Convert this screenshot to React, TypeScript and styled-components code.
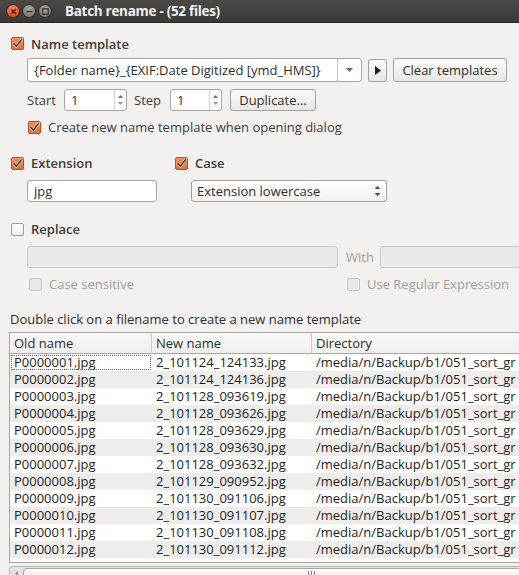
import React from "react";
import styled, { createGlobalStyle, css } from "styled-components";

const GlobalStyle = createGlobalStyle`
  html, body { margin: 0; padding: 0; background: #f2f1f0; }
  body { font-family: "Open Sans", "DejaVu Sans", sans-serif; font-size: 13px; color: #3c3c3c; }
  * { box-sizing: border-box; }
`;

const Window = styled.div`
  width: 519px;
  height: 575px;
  overflow: hidden;
  background: #f2f1f0;
  display: flex;
  flex-direction: column;
`;

const TitleBar = styled.div`
  height: 23px;
  flex: none;
  display: flex;
  align-items: center;
  background: linear-gradient(#4a4945, #3a3935);
  border-bottom: 1px solid #2a2926;
  padding-left: 6px;
`;

const WinBtn = styled.div<{ $close?: boolean }>`
  width: 14px;
  height: 14px;
  border-radius: 50%;
  margin-right: 2px;
  display: flex;
  align-items: center;
  justify-content: center;
  border: 1px solid #2d2c29;
  background: ${(p) =>
    p.$close
      ? "radial-gradient(circle at 50% 35%, #f8956b, #e4511d 70%)"
      : "radial-gradient(circle at 50% 35%, #a8a7a2, #7c7b77 70%)"};
`;

const Title = styled.div`
  margin-left: 11px;
  color: #f2f1f0;
  font-weight: bold;
  font-size: 13.5px;
  letter-spacing: -0.3px;
`;

const Content = styled.div`
  display: flex;
  flex-direction: column;
  padding-left: 11px;
  flex: 1;
  min-height: 0;
`;

const Row = styled.div<{ $top: number; $h: number; $indent?: number; $gap?: number }>`
  display: flex;
  align-items: center;
  margin-top: ${(p) => p.$top}px;
  height: ${(p) => p.$h}px;
  padding-left: ${(p) => p.$indent ?? 0}px;
  gap: ${(p) => p.$gap ?? 0}px;
  flex: none;
  white-space: nowrap;
`;

const CheckLabel = styled.label<{ $disabled?: boolean; $bold?: boolean; $w?: number }>`
  display: inline-flex;
  align-items: center;
  gap: 7px;
  flex: none;
  color: ${(p) => (p.$disabled ? "#a09f9c" : "#3c3c3c")};
  font-weight: ${(p) => (p.$bold ? 600 : 400)};
  width: ${(p) => (p.$w ? `${p.$w}px` : "auto")};
`;

const Box = styled.span<{ $checked?: boolean; $disabled?: boolean }>`
  width: 13px;
  height: 13px;
  border-radius: 2px;
  display: inline-flex;
  align-items: center;
  justify-content: center;
  flex: none;
  ${(p) =>
    p.$checked
      ? css`
          background: linear-gradient(#f6905f, #e96a33);
          border: 1px solid #b9501f;
        `
      : p.$disabled
      ? css`
          background: #e9e8e6;
          border: 1px solid #c9c7c4;
        `
      : css`
          background: linear-gradient(#ffffff, #f1f0ef);
          border: 1px solid #9f9d99;
        `}
`;

const Check = ({ checked, disabled }: { checked?: boolean; disabled?: boolean }) => (
  <Box $checked={checked} $disabled={disabled}>
    {checked && (
      <svg width="11" height="11" viewBox="0 0 11 11">
        <path d="M1.8 5.6 L4.3 8.3 L9.4 1.6" fill="none" stroke="#fff" strokeWidth="2.6" strokeLinecap="round" strokeLinejoin="round" />
        <path d="M1.8 5.6 L4.3 8.3 L9.4 1.6" fill="none" stroke="#3b2a22" strokeWidth="1.5" strokeLinecap="round" strokeLinejoin="round" />
      </svg>
    )}
  </Box>
);

const Field = styled.div<{ $w: number; $h?: number; $disabled?: boolean }>`
  width: ${(p) => p.$w}px;
  height: ${(p) => p.$h ?? 22}px;
  flex: none;
  display: flex;
  align-items: center;
  border-radius: 3px;
  border: 1px solid ${(p) => (p.$disabled ? "#cbc9c6" : "#a9a7a3")};
  background: ${(p) => (p.$disabled ? "#ebeae8" : "#ffffff")};
  padding-left: 6px;
  color: #2e2e2e;
  overflow: hidden;
  position: relative;
`;

const FieldText = styled.span`
  flex: 1;
  overflow: hidden;
  white-space: nowrap;
`;

const ComboDrop = styled.div`
  width: 24px;
  align-self: stretch;
  border-left: 1px solid #c8c6c3;
  display: flex;
  align-items: center;
  justify-content: center;
  flex: none;
`;

const SpinArrows = styled.div`
  width: 12px;
  align-self: stretch;
  border-left: 1px solid #d6d4d1;
  display: flex;
  flex-direction: column;
  align-items: center;
  justify-content: center;
  gap: 4px;
  flex: none;
`;

const Button = styled.div<{ $w: number; $h?: number }>`
  width: ${(p) => p.$w}px;
  height: ${(p) => p.$h ?? 22}px;
  flex: none;
  display: flex;
  align-items: center;
  justify-content: center;
  border-radius: 3px;
  border: 1px solid #a3a19d;
  background: linear-gradient(#fbfbfa, #e8e7e5);
  color: #2e2e2e;
`;

const SelectBox = styled.div<{ $w: number }>`
  width: ${(p) => p.$w}px;
  height: 22px;
  flex: none;
  display: flex;
  align-items: center;
  justify-content: space-between;
  border-radius: 3px;
  border: 1px solid #a3a19d;
  background: linear-gradient(#ffffff, #f3f2f1);
  padding: 0 6px 0 5px;
  color: #2e2e2e;
`;

const PlainLabel = styled.span<{ $disabled?: boolean }>`
  flex: none;
  color: ${(p) => (p.$disabled ? "#a09f9c" : "#3c3c3c")};
`;

const Hint = styled.div`
  margin-top: 20px;
  height: 16px;
  line-height: 16px;
  flex: none;
  margin-left: -1px;
  white-space: nowrap;
  color: #2e2e2e;
`;

const TableWrap = styled.div`
  margin-top: 5px;
  margin-left: -2px;
  width: 560px;
  border: 1px solid #a8a6a2;
  border-right: none;
  background: #ffffff;
  flex: none;
  height: 231px;
  overflow: hidden;
`;

const Grid = styled.div`
  display: grid;
  grid-template-columns: 142px 160px 260px;
`;

const HeadCell = styled.div<{ $last?: boolean }>`
  height: 21px;
  line-height: 20px;
  padding-left: 4px;
  background: linear-gradient(#f9f9f8, #efeeec);
  border-bottom: 1px solid #a8a6a2;
  border-right: 1px solid ${(p) => (p.$last ? "transparent" : "#cfcdca")};
  color: #2e2e2e;
  white-space: nowrap;
`;

const Cell = styled.div<{ $alt?: boolean; $focus?: boolean }>`
  height: 17px;
  line-height: 17px;
  padding-left: 4px;
  background: ${(p) => (p.$alt ? "#eeedec" : "#ffffff")};
  color: #1e1e1e;
  white-space: nowrap;
  overflow: hidden;
  position: relative;
  ${(p) =>
    p.$focus &&
    css`
      outline: 1px dotted #6a6a6a;
      outline-offset: -2px;
    `}
`;

const ScrollBar = styled.div`
  margin-top: 3px;
  margin-left: -2px;
  height: 14px;
  width: 560px;
  display: flex;
  align-items: stretch;
  flex: none;
  background: #e4e3e1;
  border: 1px solid #b8b6b2;
  border-radius: 3px 0 0 0;
`;

const ScrollArrow = styled.div`
  width: 12px;
  display: flex;
  align-items: center;
  justify-content: center;
  flex: none;
`;

const Thumb = styled.div`
  flex: 1;
  margin: 1px 0 0 1px;
  border: 1px solid #a9a7a3;
  border-radius: 4px 0 0 0;
  background: linear-gradient(#fbfbfa, #eceae8);
  display: flex;
  align-items: center;
  padding-left: 284px;
  gap: 2px;
`;

const Grip = styled.span`
  width: 1px;
  height: 5px;
  background: #8a8884;
`;

const rows = [
  ["P0000001.jpg", "2_101124_124133.jpg"],
  ["P0000002.jpg", "2_101124_124136.jpg"],
  ["P0000003.jpg", "2_101128_093619.jpg"],
  ["P0000004.jpg", "2_101128_093626.jpg"],
  ["P0000005.jpg", "2_101128_093629.jpg"],
  ["P0000006.jpg", "2_101128_093630.jpg"],
  ["P0000007.jpg", "2_101128_093632.jpg"],
  ["P0000008.jpg", "2_101129_090952.jpg"],
  ["P0000009.jpg", "2_101130_091106.jpg"],
  ["P0000010.jpg", "2_101130_091107.jpg"],
  ["P0000011.jpg", "2_101130_091108.jpg"],
  ["P0000012.jpg", "2_101130_091112.jpg"],
];

const DownTri = ({ color = "#6b6a67" }: { color?: string }) => (
  <svg width="7" height="4" viewBox="0 0 7 4">
    <path d="M0 0 L7 0 L3.5 4 Z" fill={color} />
  </svg>
);
const UpTri = ({ color = "#6b6a67" }: { color?: string }) => (
  <svg width="5" height="3" viewBox="0 0 5 3">
    <path d="M0 3 L5 3 L2.5 0 Z" fill={color} />
  </svg>
);
const SmallDown = ({ color = "#6b6a67" }: { color?: string }) => (
  <svg width="5" height="3" viewBox="0 0 5 3">
    <path d="M0 0 L5 0 L2.5 3 Z" fill={color} />
  </svg>
);

export default function App() {
  return (
    <>
      <GlobalStyle />
      <Window>
        <TitleBar>
          <WinBtn $close>
            <svg width="7" height="7" viewBox="0 0 7 7">
              <path d="M1 1 L6 6 M6 1 L1 6" stroke="#4a1a08" strokeWidth="1.5" />
            </svg>
          </WinBtn>
          <WinBtn>
            <svg width="7" height="7" viewBox="0 0 7 7">
              <path d="M0.5 3.5 L6.5 3.5" stroke="#3a3936" strokeWidth="1.5" />
            </svg>
          </WinBtn>
          <WinBtn>
            <svg width="7" height="7" viewBox="0 0 7 7">
              <rect x="0.8" y="0.8" width="5.4" height="5.4" fill="none" stroke="#3a3936" strokeWidth="1.3" />
            </svg>
          </WinBtn>
          <Title>Batch rename - (52 files)</Title>
        </TitleBar>
        <Content>
          <Row $top={13} $h={15}>
            <CheckLabel $bold>
              <Check checked />
              Name template
            </CheckLabel>
          </Row>
          <Row $top={7} $h={24} $indent={16} $gap={0}>
            <Field $w={335} $h={24}>
              <FieldText>{"{Folder name}_{EXIF:Date Digitized [ymd_HMS]}"}</FieldText>
              <ComboDrop>
                <DownTri />
              </ComboDrop>
            </Field>
            <Button $w={19} $h={23} style={{ marginLeft: 6 }}>
              <svg width="6" height="9" viewBox="0 0 6 9">
                <path d="M0 0 L6 4.5 L0 9 Z" fill="#1e1e1e" />
              </svg>
            </Button>
            <Button $w={114} $h={24} style={{ marginLeft: 6 }}>
              Clear templates
            </Button>
          </Row>
          <Row $top={7} $h={22} $indent={16}>
            <PlainLabel style={{ width: 37 }}>Start</PlainLabel>
            <Field $w={63}>
              <FieldText>1</FieldText>
              <SpinArrows>
                <UpTri />
                <SmallDown color="#9a9996" />
              </SpinArrows>
            </Field>
            <PlainLabel style={{ marginLeft: 7, width: 36 }}>Step</PlainLabel>
            <Field $w={52}>
              <FieldText>1</FieldText>
              <SpinArrows>
                <UpTri />
                <SmallDown color="#9a9996" />
              </SpinArrows>
            </Field>
            <Button $w={86} style={{ marginLeft: 8 }}>
              Duplicate...
            </Button>
          </Row>
          <Row $top={9} $h={14} $indent={17}>
            <CheckLabel>
              <Check checked />
              Create new name template when opening dialog
            </CheckLabel>
          </Row>
          <Row $top={22} $h={14}>
            <CheckLabel $bold $w={164}>
              <Check checked />
              Extension
            </CheckLabel>
            <CheckLabel $bold>
              <Check checked />
              Case
            </CheckLabel>
          </Row>
          <Row $top={10} $h={22} $indent={16}>
            <Field $w={130}>
              <FieldText>jpg</FieldText>
            </Field>
            <SelectBox $w={196} style={{ marginLeft: 34 }}>
              <span>Extension lowercase</span>
              <SpinArrows style={{ border: "none", width: 6 }}>
                <UpTri color="#3c3c3c" />
                <SmallDown color="#3c3c3c" />
              </SpinArrows>
            </SelectBox>
          </Row>
          <Row $top={20} $h={14}>
            <CheckLabel $bold>
              <Check />
              Replace
            </CheckLabel>
          </Row>
          <Row $top={10} $h={22} $indent={16}>
            <Field $w={311} $disabled />
            <PlainLabel $disabled style={{ marginLeft: 8, width: 34 }}>
              With
            </PlainLabel>
            <Field $w={160} $disabled />
          </Row>
          <Row $top={9} $h={14} $indent={18}>
            <CheckLabel $disabled $w={318}>
              <Check disabled />
              Case sensitive
            </CheckLabel>
            <CheckLabel $disabled>
              <Check disabled />
              Use Regular Expression
            </CheckLabel>
          </Row>
          <Hint>Double click on a filename to create a new name template</Hint>
          <TableWrap>
            <Grid>
              <HeadCell>Old name</HeadCell>
              <HeadCell>New name</HeadCell>
              <HeadCell $last>Directory</HeadCell>
              {rows.map(([o, n], i) => (
                <React.Fragment key={o}>
                  <Cell $alt={i % 2 === 1} $focus={i === 0}>
                    {o}
                  </Cell>
                  <Cell $alt={i % 2 === 1}>{n}</Cell>
                  <Cell $alt={i % 2 === 1}>/media/n/Backup/b1/051_sort_gr</Cell>
                </React.Fragment>
              ))}
            </Grid>
          </TableWrap>
          <ScrollBar>
            <ScrollArrow>
              <svg width="3" height="5" viewBox="0 0 3 5">
                <path d="M3 0 L0 2.5 L3 5 Z" fill="#8a8884" />
              </svg>
            </ScrollArrow>
            <Thumb>
              <Grip />
              <Grip />
              <Grip />
            </Thumb>
          </ScrollBar>
        </Content>
      </Window>
    </>
  );
}
